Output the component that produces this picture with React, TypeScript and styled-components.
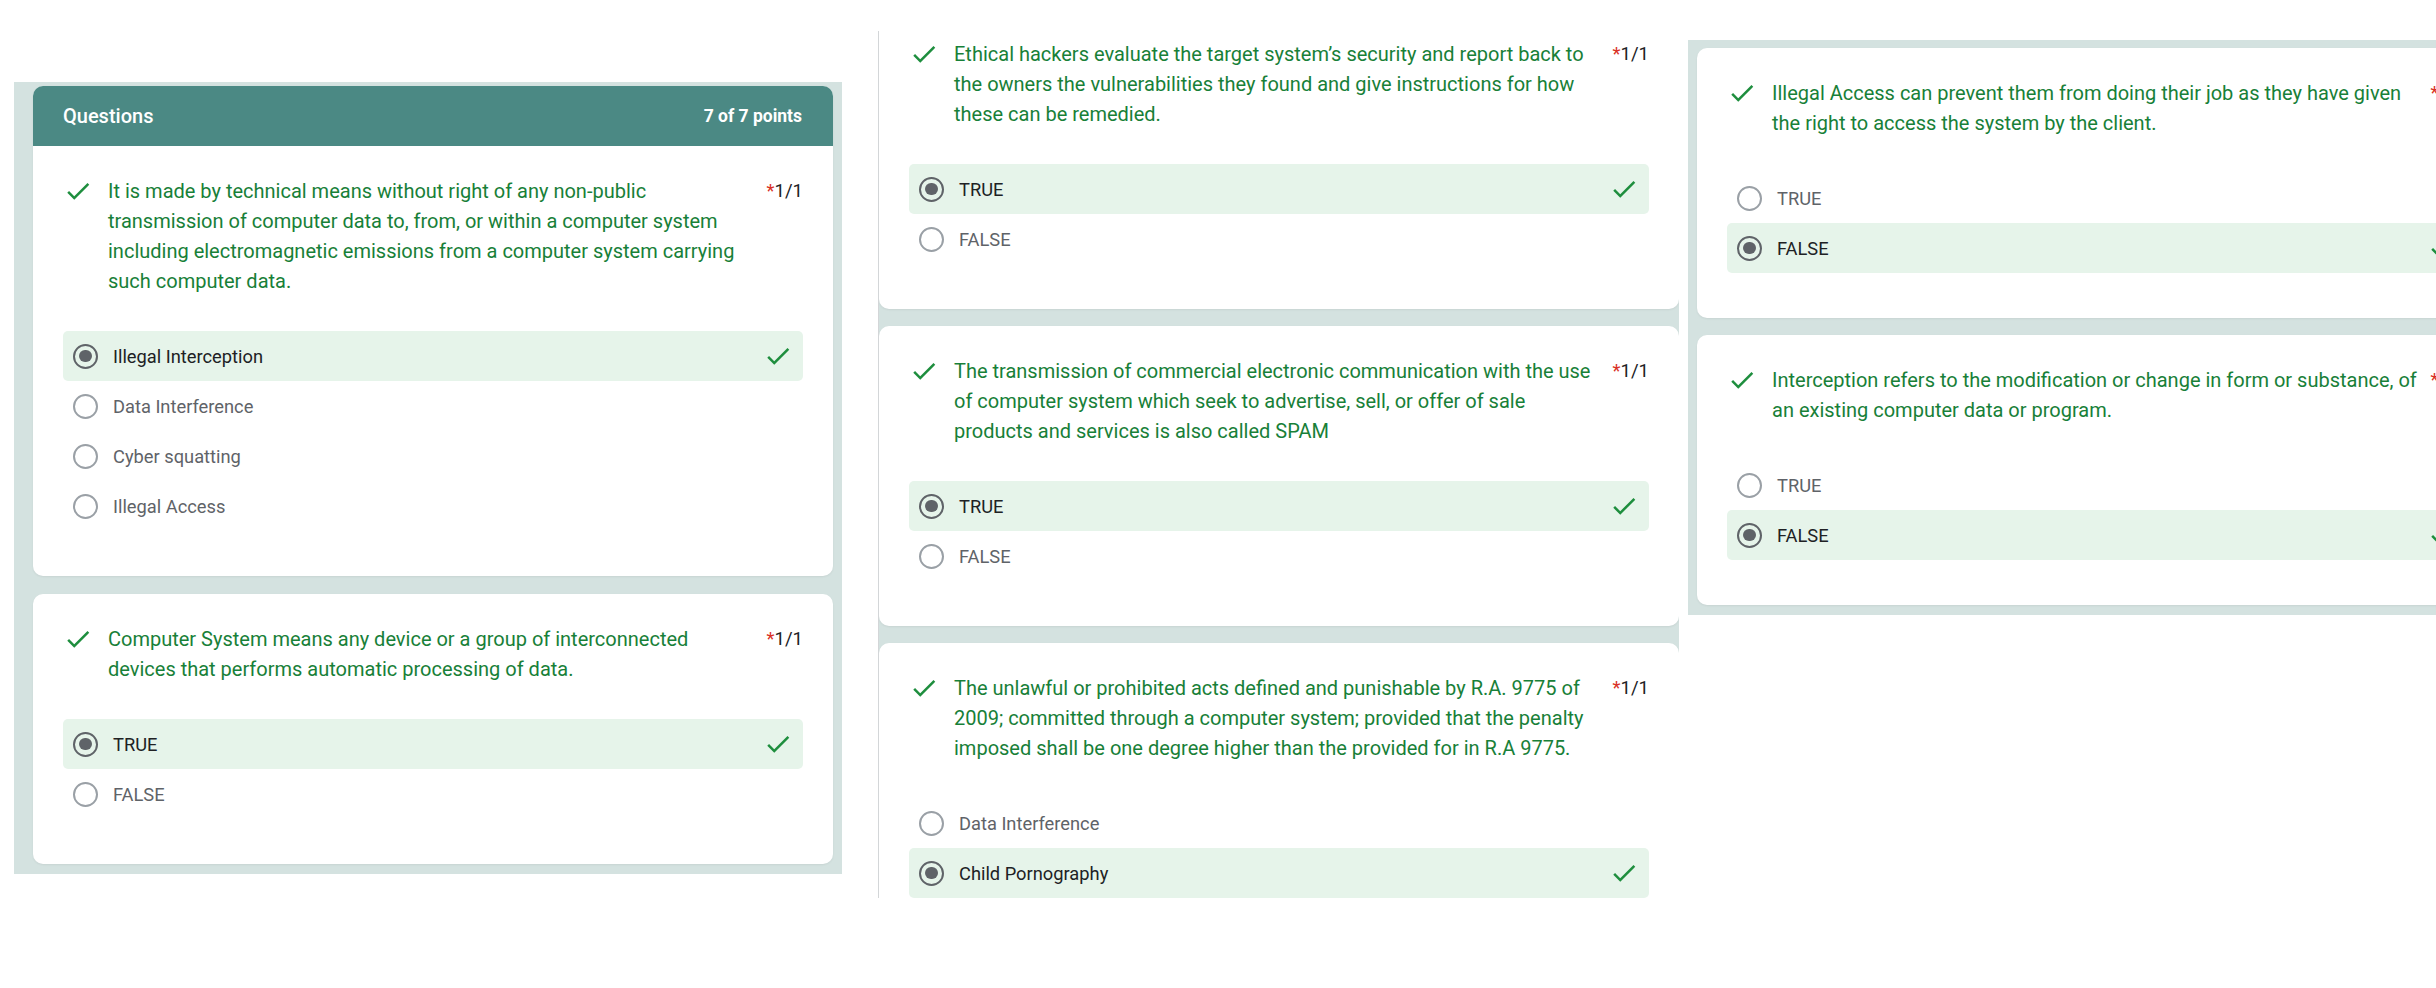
import React from "react";
import styled, { createGlobalStyle } from "styled-components";

const GlobalStyle = createGlobalStyle`
  html, body {
    margin: 0;
    padding: 0;
    background: #ffffff;
  }
  body {
    font-family: Roboto, "Liberation Sans", Arial, sans-serif;
    -webkit-font-smoothing: antialiased;
  }
  * { box-sizing: border-box; }
`;

const PANEL_BG = "#d4e2e0";
const GREEN = "#188038";
const CHECK_GREEN = "#1e8e3e";

const Page = styled.main`
  width: 2436px;
  height: 988px;
  overflow: hidden;
  display: flex;
  align-items: flex-start;
  background: #ffffff;
`;

const LeftPanel = styled.section`
  flex-shrink: 0;
  margin: 82px 0 0 14px;
  width: 828px;
  padding: 4px 9px 10px 19px;
  background: ${PANEL_BG};
  display: flex;
  flex-direction: column;
  gap: 18px;
`;

const MiddlePanel = styled.section`
  flex-shrink: 0;
  margin: 31px 0 0 36px;
  width: 801px;
  height: 867px;
  overflow: hidden;
  background: ${PANEL_BG};
  border-left: 1px solid #d3d6d8;
  display: flex;
  flex-direction: column;
  gap: 17px;
`;

const RightPanel = styled.section`
  flex-shrink: 0;
  margin: 40px 0 0 9px;
  width: 820px;
  padding: 8px 0 10px 9px;
  background: ${PANEL_BG};
  display: flex;
  flex-direction: column;
  gap: 17px;
`;

const Card = styled.article<{ $clipTop?: boolean }>`
  flex-shrink: 0;
  width: 800px;
  background: #ffffff;
  border-radius: 10px;
  overflow: hidden;
  margin-top: ${(p) => (p.$clipTop ? "-22px" : "0")};
  box-shadow: 0 1px 2px rgba(60, 64, 67, 0.08);
`;

const Header = styled.header`
  height: 60px;
  background: #4b8984;
  color: #ffffff;
  display: flex;
  align-items: center;
  justify-content: space-between;
  padding: 0 31px 0 30px;
`;

const HeaderTitle = styled.span`
  font-size: 20px;
  font-weight: 500;
`;

const HeaderScore = styled.span`
  font-size: 17.5px;
  font-weight: 700;
`;

const Body = styled.div`
  padding: 30px 30px 45px 30px;
`;

const QuestionHead = styled.div`
  display: flex;
  align-items: flex-start;
`;

const IconBox = styled.span`
  flex-shrink: 0;
  width: 30px;
  height: 30px;
  display: inline-flex;
  color: ${CHECK_GREEN};
`;

const QuestionText = styled.div`
  flex: 0 0 649px;
  margin-left: 15px;
  font-size: 20px;
  line-height: 30px;
  color: ${GREEN};
`;

const Points = styled.div`
  margin-left: auto;
  flex-shrink: 0;
  font-size: 18.5px;
  line-height: 30px;
  color: #202124;
  white-space: nowrap;
`;

const Required = styled.span`
  color: #d93025;
`;

const OptionList = styled.div`
  margin-top: 35px;
  display: flex;
  flex-direction: column;
`;

const OptionRow = styled.div<{ $selected: boolean }>`
  height: 50px;
  display: flex;
  align-items: center;
  padding: 0 10px 0 10px;
  border-radius: 5px;
  background: ${(p) => (p.$selected ? "#e6f4ea" : "transparent")};
`;

const Radio = styled.span<{ $selected: boolean }>`
  flex-shrink: 0;
  width: 25px;
  height: 25px;
  border-radius: 50%;
  border: 2.5px solid ${(p) => (p.$selected ? "#5f6368" : "#9aa0a6")};
  display: flex;
  align-items: center;
  justify-content: center;

  &::after {
    content: "";
    display: ${(p) => (p.$selected ? "block" : "none")};
    width: 12.5px;
    height: 12.5px;
    border-radius: 50%;
    background: #5f6368;
  }
`;

const OptionLabel = styled.span<{ $selected: boolean }>`
  flex: 1;
  margin-left: 15px;
  font-size: 18.3px;
  color: ${(p) => (p.$selected ? "#202124" : "#5f6368")};
`;

const CheckIcon = () => (
  <IconBox>
    <svg width="30" height="30" viewBox="0 0 24 24" fill="currentColor" aria-hidden="true">
      <path d="M9 16.17L4.83 12l-1.42 1.41L9 19 21 7l-1.41-1.41z" />
    </svg>
  </IconBox>
);

type Option = { label: string; selected?: boolean };

type QuestionProps = {
  text: string;
  options: Option[];
  header?: boolean;
  clipTop?: boolean;
};

const Question: React.FC<QuestionProps> = ({ text, options, header, clipTop }) => (
  <Card $clipTop={clipTop}>
    {header && (
      <Header>
        <HeaderTitle>Questions</HeaderTitle>
        <HeaderScore>7 of 7 points</HeaderScore>
      </Header>
    )}
    <Body>
      <QuestionHead>
        <CheckIcon />
        <QuestionText>{text}</QuestionText>
        <Points>
          <Required>*</Required>1/1
        </Points>
      </QuestionHead>
      <OptionList>
        {options.map((o) => (
          <OptionRow key={o.label} $selected={!!o.selected}>
            <Radio $selected={!!o.selected} />
            <OptionLabel $selected={!!o.selected}>{o.label}</OptionLabel>
            {o.selected && <CheckIcon />}
          </OptionRow>
        ))}
      </OptionList>
    </Body>
  </Card>
);

const TF = (answer: boolean): Option[] => [
  { label: "TRUE", selected: answer },
  { label: "FALSE", selected: !answer },
];

export default function App() {
  return (
    <>
      <GlobalStyle />
      <Page>
        <LeftPanel>
          <Question
            header
            text="It is made by technical means without right of any non-public transmission of computer data to, from, or within a computer system including electromagnetic emissions from a computer system carrying such computer data."
            options={[
              { label: "Illegal Interception", selected: true },
              { label: "Data Interference" },
              { label: "Cyber squatting" },
              { label: "Illegal Access" },
            ]}
          />
          <Question
            text="Computer System means any device or a group of interconnected devices that performs automatic processing of data."
            options={TF(true)}
          />
        </LeftPanel>

        <MiddlePanel>
          <Question
            clipTop
            text="Ethical hackers evaluate the target system’s security and report back to the owners the vulnerabilities they found and give instructions for how these can be remedied."
            options={TF(true)}
          />
          <Question
            text="The transmission of commercial electronic communication with the use of computer system which seek to advertise, sell, or offer of sale products and services is also called SPAM"
            options={TF(true)}
          />
          <Question
            text="The unlawful or prohibited acts defined and punishable by R.A. 9775 of 2009; committed through a computer system; provided that the penalty imposed shall be one degree higher than the provided for in R.A 9775."
            options={[
              { label: "Data Interference" },
              { label: "Child Pornography", selected: true },
            ]}
          />
        </MiddlePanel>

        <RightPanel>
          <Question
            text="Illegal Access can prevent them from doing their job as they have given the right to access the system by the client."
            options={TF(false)}
          />
          <Question
            text="Interception refers to the modification or change in form or substance, of an existing computer data or program."
            options={TF(false)}
          />
        </RightPanel>
      </Page>
    </>
  );
}
